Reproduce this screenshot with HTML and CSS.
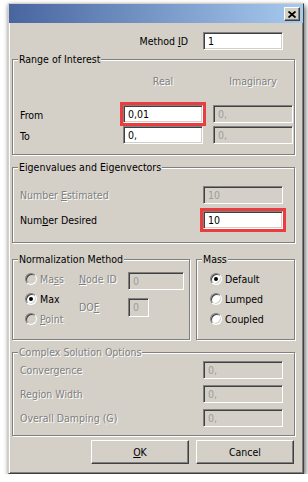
FILE: index.html
```html
<!DOCTYPE html>
<html lang="en">
<head>
    <meta charset="UTF-8">
    <meta name="viewport" content="width=device-width, initial-scale=1.0">
    <title>Eigenvalue Extraction</title>
    <link rel="stylesheet" href="styles.css">
</head>
<body>
    <div class="window">
        <div class="titlebar">
            <span class="close">
                <svg width="8" height="7" viewBox="0 0 8 7"><path d="M0.5 0.5 L7.5 6.5 M7.5 0.5 L0.5 6.5" stroke="#000" stroke-width="1.8"/></svg>
            </span>
        </div>

        <div class="content">
            <div class="method-row">
                <label>Method <u>I</u>D</label>
                <div class="edit">1</div>
            </div>

            <fieldset class="group">
                <legend>Range of Interest</legend>
                <div class="range-grid">
                    <span></span>
                    <span class="col-head dis">Real</span>
                    <span class="col-head dis">Imaginary</span>

                    <label class="row-label">From</label>
                    <div class="edit hl">0,01</div>
                    <div class="edit off">0,</div>

                    <label class="row-label">To</label>
                    <div class="edit">0,</div>
                    <div class="edit off">0,</div>
                </div>
            </fieldset>

            <fieldset class="group eigen">
                <legend>Eigenvalues and Eigenvectors</legend>
                <div class="form-grid">
                    <label class="dis">Number <u>E</u>stimated</label>
                    <div class="edit off">10</div>

                    <label>Num<u>b</u>er Desired</label>
                    <div class="edit hl">10</div>
                </div>
            </fieldset>

            <div class="split">
                <fieldset class="group norm">
                    <legend>Normalization Method</legend>
                    <div class="norm-body">
                        <div class="radios">
                            <div class="radio-row dis"><span class="radio off"></span><span>Ma<u>s</u>s</span></div>
                            <div class="radio-row"><span class="radio on"></span><span>Max</span></div>
                            <div class="radio-row dis"><span class="radio off"></span><span><u>P</u>oint</span></div>
                        </div>
                        <div class="node-grid">
                            <label class="dis node-label"><u>N</u>ode ID</label>
                            <div class="edit off node">0</div>
                            <label class="dis">DO<u>F</u></label>
                            <div class="edit off dof">0</div>
                        </div>
                    </div>
                </fieldset>

                <fieldset class="group mass">
                    <legend>Mass</legend>
                    <div class="radios">
                        <div class="radio-row"><span class="radio on"></span><span>Default</span></div>
                        <div class="radio-row"><span class="radio"></span><span>Lumped</span></div>
                        <div class="radio-row"><span class="radio"></span><span>Coupled</span></div>
                    </div>
                </fieldset>
            </div>

            <fieldset class="group complex">
                <legend class="dis">Complex Solution Options</legend>
                <div class="form-grid">
                    <label class="dis">Convergence</label>
                    <div class="edit off">0,</div>

                    <label class="dis">Region Width</label>
                    <div class="edit off">0,</div>

                    <label class="dis">Overall Damping (G)</label>
                    <div class="edit off">0,</div>
                </div>
            </fieldset>

            <div class="buttons">
                <button><u>O</u>K</button>
                <button>Cancel</button>
            </div>
        </div>
    </div>
</body>
</html>
```

FILE: styles.css
```css
body {
    margin: 0;
    background: #fff;
    font-family: "DejaVu Sans Condensed", "DejaVu Sans", sans-serif;
    font-stretch: condensed;
    font-size: 10.5px;
    line-height: 13px;
    color: #000;
}

.window {
    box-sizing: border-box;
    width: 296px;
    height: 471px;
    margin: 3px 0 0 8px;
    background: #d4d0c8;
    border: 1px solid;
    border-color: #d4d0c8 #404040 #404040 #d4d0c8;
    box-shadow: inset 1px 1px #fff, inset -1px -1px #808080,
                2px 3px 5px rgba(0, 0, 0, .5), -1px 1px 4px rgba(0, 0, 0, .2);
}

.titlebar {
    box-sizing: border-box;
    height: 19px;
    padding: 3px 3px 0 0;
    display: flex;
    justify-content: flex-end;
    background: linear-gradient(to right, #48659f, #a7caef);
}

.close {
    box-sizing: border-box;
    width: 16px;
    height: 14px;
    display: flex;
    align-items: center;
    justify-content: center;
    background: #d4d0c8;
    border: 1px solid;
    border-color: #fff #404040 #404040 #fff;
    box-shadow: inset -1px -1px #808080;
}

.content {
    padding: 9px 8px 0 3px;
}

u {
    text-decoration: underline;
    text-underline-offset: 1px;
}

.dis {
    color: #808080;
    text-shadow: 1px 1px 0 #fff;
}

/* edit boxes */
.edit {
    box-sizing: border-box;
    width: 80px;
    height: 18px;
    padding: 0 4px;
    display: flex;
    align-items: center;
    background: #fff;
    border: 1px solid;
    border-color: #808080 #fff #fff #808080;
    box-shadow: inset 1px 1px #404040, inset -1px -1px #d4d0c8;
}

.edit.off {
    background: #d4d0c8;
    color: #9c9c9c;
}

.edit.hl {
    outline: 3px solid #e93d40;
}

.method-row {
    display: flex;
    justify-content: flex-end;
    align-items: center;
    gap: 15px;
    padding-right: 12px;
}

/* group boxes */
.group {
    margin: 3px 0 0;
    padding: 0 0 10px 7px;
    min-width: 0;
    border: 1px solid #808080;
    box-shadow: inset 1px 1px #fff, 1px 1px #fff;
}

.group legend {
    padding: 0 1px;
    margin-left: -2px;
    background: #d4d0c8;
}

.range-grid {
    margin-top: 9px;
    display: grid;
    grid-template-columns: 93px 80px 80px;
    column-gap: 10px;
    row-gap: 3px;
    align-items: center;
}

.col-head {
    text-align: center;
    margin-bottom: 14px;
}

.row-label {
    padding-top: 3px;
}

.eigen {
    margin-top: 6px;
    padding-bottom: 13px;
}

.form-grid {
    margin-top: 12px;
    display: grid;
    grid-template-columns: 183px 80px;
    row-gap: 7px;
    align-items: center;
}

.split {
    margin-top: 7px;
    display: flex;
    gap: 6px;
}

.norm {
    width: 178px;
    box-sizing: border-box;
}

.mass {
    flex: 1;
}

.norm-body {
    display: flex;
    align-items: flex-start;
}

.radios {
    margin-top: 3px;
    margin-left: 5px;
}

.norm .radios {
    width: 54px;
}

.mass .radios {
    margin-left: 6px;
}

.radio-row {
    height: 20px;
    display: flex;
    align-items: center;
    gap: 3px;
}

.radio {
    box-sizing: border-box;
    width: 12px;
    height: 12px;
    border-radius: 50%;
    display: flex;
    align-items: center;
    justify-content: center;
    background: #fff;
    border: 1px solid;
    border-color: #808080 #fff #fff #808080;
    box-shadow: inset 1px 1px #404040, inset -1px -1px #d4d0c8;
}

.radio.off {
    background: #d4d0c8;
}

.radio.on::after {
    content: "";
    width: 4px;
    height: 4px;
    border-radius: 50%;
    background: #000;
}

.node-grid {
    margin-top: 6px;
    display: grid;
    grid-template-columns: 49px auto;
    row-gap: 8px;
    align-items: center;
}

.node-label {
    align-self: start;
    margin-top: 1px;
}

.edit.node {
    width: 56px;
}

.edit.dof {
    width: 21px;
    height: 19px;
}

.complex {
    margin-top: 6px;
    padding-bottom: 8px;
}

.complex .form-grid {
    margin-top: 2px;
    row-gap: 6px;
}

/* buttons */
.buttons {
    margin-top: 4px;
    padding-right: 1px;
    display: flex;
    justify-content: flex-end;
    gap: 7px;
}

button {
    box-sizing: border-box;
    width: 98px;
    height: 24px;
    padding: 0;
    font: inherit;
    color: #000;
    background: #d4d0c8;
    border: 1px solid;
    border-color: #fff #404040 #404040 #fff;
    box-shadow: inset -1px -1px #808080;
}
```
